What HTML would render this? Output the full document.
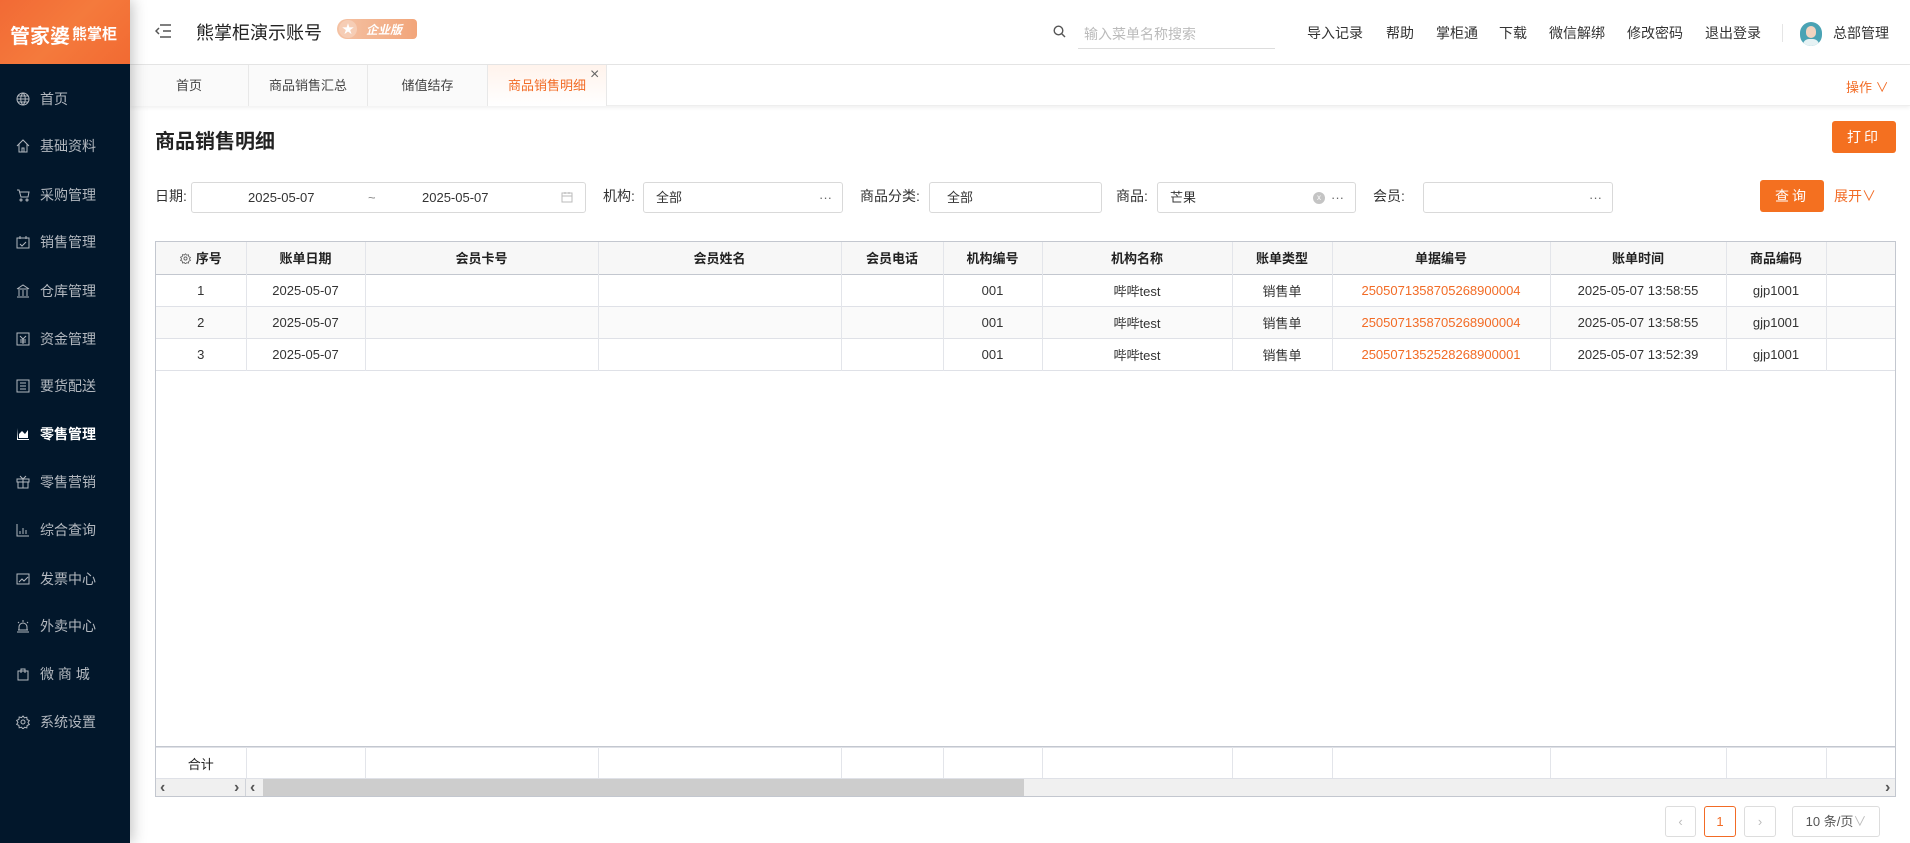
<!DOCTYPE html>
<html><head><meta charset="utf-8">
<style>
*{margin:0;padding:0;box-sizing:border-box}
body{width:1910px;height:843px;overflow:hidden;background:#fff;font-family:"Liberation Sans","Noto Sans CJK SC",sans-serif;color:#333;position:relative}
.abs{position:absolute}
#side{left:0;top:0;width:130px;height:843px;background:#02172b;box-shadow:2px 0 14px rgba(0,0,0,.25);z-index:5}
#logo{left:0;top:0;width:130px;height:64px;background:linear-gradient(135deg,#f26a35 0%,#f47a3c 50%,#f26a32 100%);color:#fff;font-weight:bold;white-space:nowrap}
.mi{position:absolute;left:0;width:130px;height:40px;line-height:40px;color:#b3b8bf;font-size:14px}
.mi svg{position:absolute;left:16px;top:13px}
.mi span{position:absolute;left:40px}
.mi.act{color:#fff;font-weight:bold}
.hl{font-size:14px;color:#333;top:23px}
.tab{top:65px;height:41px;line-height:41px;text-align:center;font-size:13px;color:#444;border-right:1px solid #e8e8e8}
.lbl{font-size:14px;color:#333;top:186px}
.inp{top:182px;height:31px;border:1px solid #d9d9d9;border-radius:3px;font-size:13px;line-height:29px;color:#333}
table{border-collapse:collapse;table-layout:fixed;font-size:13px}
td,th{text-align:center;border-right:1px solid #e3e5ea;height:32px;overflow:hidden;white-space:nowrap}
th{background:#f7f7f7;font-weight:bold;color:#222}
tbody tr{border-top:1px solid #dfe1e7}
.or{color:#f26b25}
.pg{top:806px;height:31px;border:1px solid #ddd;border-radius:3px;text-align:center;line-height:29px;font-size:13px;color:#bbb}
.ar{position:absolute;top:536px;font-size:16px;line-height:19px;color:#555;font-weight:bold}
</style></head><body>
<div id="side" class="abs">
 <div id="logo" class="abs"><span class="abs" style="left:10px;top:20px;font-size:20px">管家婆</span><span class="abs" style="left:72px;top:23px;font-size:15px">熊掌柜</span></div>
 <div class="mi" style="top:79px"><svg width="14" height="14" viewBox="0 0 14 14" fill="none" stroke="#b3b8bf"><circle cx="7" cy="7" r="6"/><path d="M1 7h12M7 1c-3 3-3 9 0 12M7 1c3 3 3 9 0 12M2 4h10M2 10h10"/></svg><span>首页</span></div>
 <div class="mi" style="top:126px"><svg width="14" height="14" viewBox="0 0 14 14" fill="none" stroke="#b3b8bf"><path d="M1 7L7 1l6 6M3 5v8h8V5M6 13V9h2v4"/></svg><span>基础资料</span></div>
 <div class="mi" style="top:175px"><svg width="14" height="14" viewBox="0 0 14 14" fill="none" stroke="#b3b8bf"><path d="M1 2h2l2 7h7l1-5H4"/><circle cx="5" cy="12" r="1"/><circle cx="11" cy="12" r="1"/></svg><span>采购管理</span></div>
 <div class="mi" style="top:222px"><svg width="14" height="14" viewBox="0 0 14 14" fill="none" stroke="#b3b8bf"><rect x="1" y="3" width="12" height="10"/><path d="M4 1v3M10 1v3M4 9l2 2 4-4"/></svg><span>销售管理</span></div>
 <div class="mi" style="top:271px"><svg width="14" height="14" viewBox="0 0 14 14" fill="none" stroke="#b3b8bf"><path d="M1 5l6-4 6 4M2 5h10M3 6v6M7 6v6M11 6v6M1 13h12"/></svg><span>仓库管理</span></div>
 <div class="mi" style="top:319px"><svg width="14" height="14" viewBox="0 0 14 14" fill="none" stroke="#b3b8bf"><rect x="1" y="1" width="12" height="12"/><path d="M4 4l3 3 3-3M7 7v5M4 8h6M4 10h6"/></svg><span>资金管理</span></div>
 <div class="mi" style="top:366px"><svg width="14" height="14" viewBox="0 0 14 14" fill="none" stroke="#b3b8bf"><rect x="1" y="1" width="12" height="12"/><path d="M4 4h6M4 7h6M4 10h6"/></svg><span>要货配送</span></div>
 <div class="mi act" style="top:414px"><svg width="14" height="14" viewBox="0 0 14 14"><path d="M1 1v12h12v-1H2z" fill="#fff"/><path d="M3 11V7l3-3 3 3 3-4v8z" fill="#fff"/></svg><span>零售管理</span></div>
 <div class="mi" style="top:462px"><svg width="14" height="14" viewBox="0 0 14 14" fill="none" stroke="#b3b8bf"><rect x="1" y="4" width="12" height="3"/><rect x="2" y="7" width="10" height="6"/><path d="M7 4v9M4 1l3 3 3-3"/></svg><span>零售营销</span></div>
 <div class="mi" style="top:510px"><svg width="14" height="14" viewBox="0 0 14 14" fill="none" stroke="#b3b8bf"><path d="M1 1v12h12M4 11V8M7 11V5M10 11V7"/></svg><span>综合查询</span></div>
 <div class="mi" style="top:559px"><svg width="14" height="14" viewBox="0 0 14 14" fill="none" stroke="#b3b8bf"><rect x="1" y="2" width="12" height="10"/><path d="M3 10l3-3 2 2 4-4"/></svg><span>发票中心</span></div>
 <div class="mi" style="top:606px"><svg width="14" height="14" viewBox="0 0 14 14" fill="none" stroke="#b3b8bf"><path d="M3 11V8a4 4 0 018 0v3M1 13h12M2 11h10M7 1v2M2 3l1 1M12 3l-1 1"/></svg><span>外卖中心</span></div>
 <div class="mi" style="top:654px"><svg width="14" height="14" viewBox="0 0 14 14" fill="none" stroke="#b3b8bf"><rect x="2" y="4" width="10" height="9"/><path d="M5 6V2h4v4"/></svg><span>微 商 城</span></div>
 <div class="mi" style="top:702px"><svg width="14" height="14" viewBox="0 0 14 14" fill="none" stroke="#b3b8bf"><circle cx="7" cy="7" r="2"/><path d="M7 1l1.5 1.8 2.3-.6.3 2.4 2.2 1L12 7.5l1.3 2-2.2 1-.3 2.4-2.3-.6L7 14l-1.5-1.8-2.3.6-.3-2.4-2.2-1 1.3-2-1.3-2 2.2-1 .3-2.4 2.3.6z"/></svg><span>系统设置</span></div>
</div>

<div class="abs" style="left:130px;top:0;width:1780px;height:65px;border-bottom:1px solid #e6e6e6;background:#fff"></div>
<svg class="abs" style="left:155px;top:24px" width="16" height="14" viewBox="0 0 16 14" fill="none" stroke="#555" stroke-width="1.5"><path d="M5 1h11M8 7h8M5 13h11M4 4L1 7l3 3"/></svg>
<div class="abs" style="left:196px;top:19px;font-size:18px;color:#222">熊掌柜演示账号</div>
<div class="abs" style="left:337px;top:19px;width:80px;height:20px;border-radius:10px 4px 4px 10px;background:linear-gradient(90deg,#f4c2a4,#f2a57a);"></div>
<div class="abs" style="left:339px;top:20px;width:18px;height:18px;border-radius:9px;background:#f6cdb5;color:#fff;font-size:12px;text-align:center;line-height:18px">★</div>
<div class="abs" style="left:366px;top:21px;font-size:12px;color:#fff;font-style:italic;font-weight:bold">企业版</div>
<svg class="abs" style="left:1053px;top:25px" width="13" height="13" viewBox="0 0 13 13" fill="none" stroke="#555" stroke-width="1.4"><circle cx="5.5" cy="5.5" r="4.3"/><path d="M8.5 8.5L12 12"/></svg>
<div class="abs" style="left:1078px;top:22px;width:197px;height:27px;border-bottom:1px solid #ddd;font-size:14px;color:#bbb;padding-left:6px;line-height:24px">输入菜单名称搜索</div>
<div class="abs hl" style="left:1307px">导入记录</div>
<div class="abs hl" style="left:1386px">帮助</div>
<div class="abs hl" style="left:1436px">掌柜通</div>
<div class="abs hl" style="left:1499px">下载</div>
<div class="abs hl" style="left:1549px">微信解绑</div>
<div class="abs hl" style="left:1627px">修改密码</div>
<div class="abs hl" style="left:1705px">退出登录</div>
<div class="abs" style="left:1782px;top:24px;width:1px;height:18px;background:#e5e5e5"></div>
<div class="abs" style="left:1800px;top:22px;width:22px;height:24px;border-radius:11px;background:#4aa3b4;overflow:hidden"><div class="abs" style="left:6px;top:4px;width:10px;height:12px;border-radius:5px;background:#f2d4c0"></div><div class="abs" style="left:3px;top:17px;width:16px;height:8px;background:#e6f2f4;border-radius:6px 6px 0 0"></div></div>
<div class="abs hl" style="left:1833px">总部管理</div>

<div class="abs" style="left:130px;top:65px;width:1780px;height:41px;background:#fff;box-shadow:0 2px 4px rgba(0,0,0,.06);border-bottom:1px solid #eee"></div>
<div class="abs tab" style="left:130px;width:119px;background:#fafafa">首页</div>
<div class="abs tab" style="left:249px;width:119px;background:#fafafa">商品销售汇总</div>
<div class="abs tab" style="left:368px;width:120px;background:#fafafa">储值结存</div>
<div class="abs tab" style="left:488px;width:119px;color:#f26b25;background:linear-gradient(180deg,#fff3ec,#fff)">商品销售明细</div>
<div class="abs" style="left:590px;top:66px;font-size:16px;color:#666">×</div>
<div class="abs" style="left:1846px;top:77px;font-size:13px;color:#f26b25">操作 ∨</div>

<div class="abs" style="left:155px;top:125px;font-size:20px;font-weight:bold;color:#222">商品销售明细</div>
<div class="abs" style="left:1832px;top:121px;width:64px;height:32px;background:#f47020;border-radius:3px;color:#fff;font-size:14px;text-align:center;line-height:32px;letter-spacing:3px">打印</div>

<div class="abs lbl" style="left:155px">日期:</div>
<div class="abs inp" style="left:191px;width:395px"><span class="abs" style="left:56px">2025-05-07</span><span class="abs" style="left:176px;color:#888">~</span><span class="abs" style="left:230px">2025-05-07</span>
<svg class="abs" style="left:369px;top:8px" width="12" height="12" viewBox="0 0 12 12" fill="none" stroke="#bbb"><rect x="1" y="2" width="10" height="9"/><path d="M1 5h10M4 1v2M8 1v2"/></svg></div>
<div class="abs lbl" style="left:603px">机构:</div>
<div class="abs inp" style="left:643px;width:200px"><span class="abs" style="left:12px">全部</span><span class="abs" style="left:175px;color:#666">···</span></div>
<div class="abs lbl" style="left:860px">商品分类:</div>
<div class="abs inp" style="left:929px;width:173px"><span class="abs" style="left:17px">全部</span></div>
<div class="abs lbl" style="left:1116px">商品:</div>
<div class="abs inp" style="left:1157px;width:199px"><span class="abs" style="left:12px">芒果</span><span class="abs" style="left:155px;top:9px;width:12px;height:12px;border-radius:6px;background:#c4c4c4;color:#fff;font-size:8px;line-height:12px;text-align:center">x</span><span class="abs" style="left:173px;color:#666">···</span></div>
<div class="abs lbl" style="left:1373px">会员:</div>
<div class="abs inp" style="left:1423px;width:190px"><span class="abs" style="left:165px;color:#666">···</span></div>
<div class="abs" style="left:1760px;top:180px;width:64px;height:32px;background:#f47020;border-radius:3px;color:#fff;font-size:14px;text-align:center;line-height:32px;letter-spacing:3px">查询</div>
<div class="abs" style="left:1834px;top:186px;font-size:14px;color:#f26b25">展开∨</div>

<div class="abs" style="left:155px;top:241px;width:1741px;height:556px;border:1px solid #c3c7cf;overflow:hidden">
<table style="width:1790px">
<colgroup><col style="width:90px"><col style="width:119px"><col style="width:233px"><col style="width:243px"><col style="width:102px"><col style="width:99px"><col style="width:190px"><col style="width:100px"><col style="width:218px"><col style="width:176px"><col style="width:100px"><col style="width:120px"></colgroup>
<thead><tr style="border-bottom:1px solid #c3c7cf"><th><svg width="11" height="11" viewBox="0 0 14 14" fill="none" stroke="#555" style="vertical-align:-1px;margin-right:5px"><circle cx="7" cy="7" r="2"/><path d="M7 1l1.5 1.8 2.3-.6.3 2.4 2.2 1L12 7.5l1.3 2-2.2 1-.3 2.4-2.3-.6L7 14l-1.5-1.8-2.3.6-.3-2.4-2.2-1 1.3-2-1.3-2 2.2-1 .3-2.4 2.3.6z"/></svg>序号</th><th>账单日期</th><th>会员卡号</th><th>会员姓名</th><th>会员电话</th><th>机构编号</th><th>机构名称</th><th>账单类型</th><th>单据编号</th><th>账单时间</th><th>商品编码</th><th></th></tr></thead>
<tbody>
<tr><td>1</td><td>2025-05-07</td><td></td><td></td><td></td><td>001</td><td>哔哔test</td><td>销售单</td><td class="or">2505071358705268900004</td><td>2025-05-07 13:58:55</td><td>gjp1001</td><td></td></tr>
<tr style="background:#fafafa"><td>2</td><td>2025-05-07</td><td></td><td></td><td></td><td>001</td><td>哔哔test</td><td>销售单</td><td class="or">2505071358705268900004</td><td>2025-05-07 13:58:55</td><td>gjp1001</td><td></td></tr>
<tr style="border-bottom:1px solid #dfe1e7"><td>3</td><td>2025-05-07</td><td></td><td></td><td></td><td>001</td><td>哔哔test</td><td>销售单</td><td class="or">2505071352528268900001</td><td>2025-05-07 13:52:39</td><td>gjp1001</td><td></td></tr>
</tbody></table>
<div class="abs" style="left:0;top:504px;width:1790px;border-top:1px solid #c3c7cf">
<table style="width:1790px"><colgroup><col style="width:90px"><col style="width:119px"><col style="width:233px"><col style="width:243px"><col style="width:102px"><col style="width:99px"><col style="width:190px"><col style="width:100px"><col style="width:218px"><col style="width:176px"><col style="width:100px"><col style="width:120px"></colgroup>
<tr><td style="color:#222">合计</td><td></td><td></td><td></td><td></td><td></td><td></td><td></td><td></td><td></td><td></td><td></td></tr></table></div>
<div class="abs" style="left:0;top:536px;width:1741px;height:19px;background:#f0f0f0;border-top:1px solid #dfe1e7"></div>
<div class="abs" style="left:89px;top:537px;width:1px;height:18px;background:#d0d3d9"></div>
<div class="ar" style="left:4px">‹</div>
<div class="ar" style="left:78px">›</div>
<div class="ar" style="left:94px">‹</div>
<div class="abs" style="left:107px;top:537px;width:761px;height:18px;background:#cdcdcd"></div>
<div class="ar" style="left:1729px">›</div>
</div>

<div class="abs pg" style="left:1665px;width:31px">‹</div>
<div class="abs pg" style="left:1704px;width:32px;border-color:#f26b25;color:#f26b25">1</div>
<div class="abs pg" style="left:1744px;width:32px">›</div>
<div class="abs pg" style="left:1792px;width:88px;color:#555">10 条/页<span style="color:#bbb">∨</span></div>
</body></html>
